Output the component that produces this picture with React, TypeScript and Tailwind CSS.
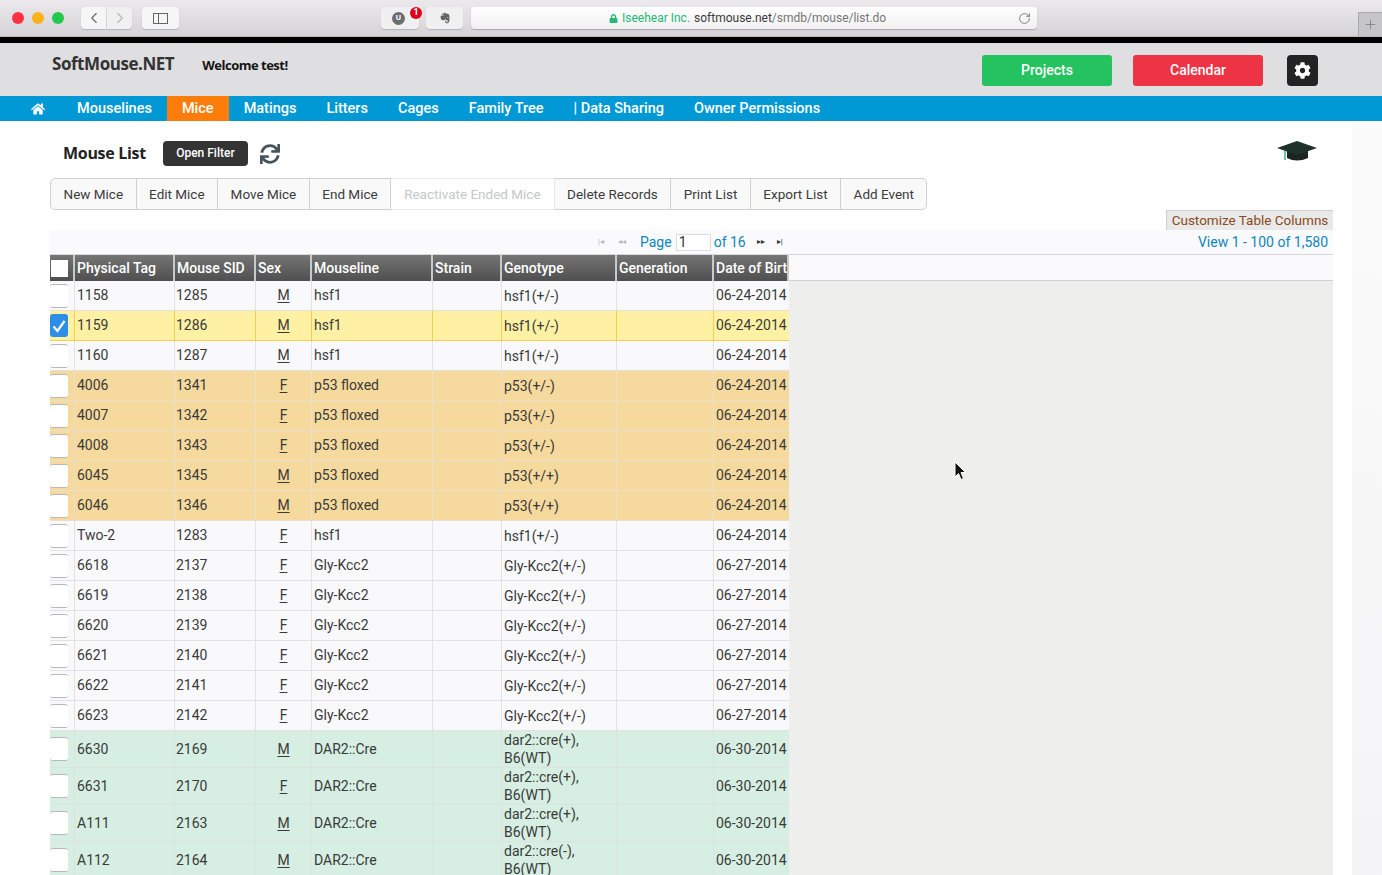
import { ChevronLeft, ChevronRight, Plus, RotateCw } from "lucide-react";
import { FaCog, FaEvernote, FaHome, FaLock, FaSync } from "react-icons/fa";

type Row = {
  tag: string;
  sid: string;
  sex: string;
  line: string;
  genotype: string;
  dob: string;
  tone: "plain" | "picked" | "tan" | "green";
};

const row = (
  tag: string,
  sid: string,
  sex: string,
  line: string,
  genotype: string,
  dob: string,
  tone: Row["tone"]
): Row => ({ tag, sid, sex, line, genotype, dob, tone });

const rows: Row[] = [
  row("1158", "1285", "M", "hsf1", "hsf1(+/-)", "06-24-2014", "plain"),
  row("1159", "1286", "M", "hsf1", "hsf1(+/-)", "06-24-2014", "picked"),
  row("1160", "1287", "M", "hsf1", "hsf1(+/-)", "06-24-2014", "plain"),
  row("4006", "1341", "F", "p53 floxed", "p53(+/-)", "06-24-2014", "tan"),
  row("4007", "1342", "F", "p53 floxed", "p53(+/-)", "06-24-2014", "tan"),
  row("4008", "1343", "F", "p53 floxed", "p53(+/-)", "06-24-2014", "tan"),
  row("6045", "1345", "M", "p53 floxed", "p53(+/+)", "06-24-2014", "tan"),
  row("6046", "1346", "M", "p53 floxed", "p53(+/+)", "06-24-2014", "tan"),
  row("Two-2", "1283", "F", "hsf1", "hsf1(+/-)", "06-24-2014", "plain"),
  row("6618", "2137", "F", "Gly-Kcc2", "Gly-Kcc2(+/-)", "06-27-2014", "plain"),
  row("6619", "2138", "F", "Gly-Kcc2", "Gly-Kcc2(+/-)", "06-27-2014", "plain"),
  row("6620", "2139", "F", "Gly-Kcc2", "Gly-Kcc2(+/-)", "06-27-2014", "plain"),
  row("6621", "2140", "F", "Gly-Kcc2", "Gly-Kcc2(+/-)", "06-27-2014", "plain"),
  row("6622", "2141", "F", "Gly-Kcc2", "Gly-Kcc2(+/-)", "06-27-2014", "plain"),
  row("6623", "2142", "F", "Gly-Kcc2", "Gly-Kcc2(+/-)", "06-27-2014", "plain"),
  row("6630", "2169", "M", "DAR2::Cre", "dar2::cre(+), B6(WT)", "06-30-2014", "green"),
  row("6631", "2170", "F", "DAR2::Cre", "dar2::cre(+), B6(WT)", "06-30-2014", "green"),
  row("A111", "2163", "M", "DAR2::Cre", "dar2::cre(+), B6(WT)", "06-30-2014", "green"),
  row("A112", "2164", "M", "DAR2::Cre", "dar2::cre(-), B6(WT)", "06-30-2014", "green"),
];

const toneClass = {
  plain: "h-[30px] bg-[#f9f9fc] border-[#e2e2e2]",
  picked: "h-[30px] bg-[#fef1a4] border-[#f0d24e]",
  tan: "h-[30px] bg-[#f6d99c] border-[#e8e0cc]",
  green: "h-[37px] bg-[#d6efe2] border-[#dce3df]",
};

const navItems = ["Mouselines", "Mice", "Matings", "Litters", "Cages", "Family Tree", "| Data Sharing", "Owner Permissions"];
const toolbar = ["New Mice", "Edit Mice", "Move Mice", "End Mice", "Reactivate Ended Mice", "Delete Records", "Print List", "Export List", "Add Event"];

function Checkbox({ checked }: { checked?: boolean }) {
  if (checked) {
    return (
      <div className="w-[18px] h-[23px] rounded-[3px] bg-[#2d8ee8] flex items-center justify-center">
        <svg width="14" height="14" viewBox="0 0 14 14" fill="none">
          <path d="M1.5 7.5 L5.5 12 L12.5 2" stroke="white" strokeWidth="2.2" />
        </svg>
      </div>
    );
  }
  return <div className="w-[18px] h-[24px] rounded-[3px] bg-white border-y border-[#b8b8b8]" />;
}

function HeadCell({ w, label }: { w: string; label: string }) {
  return (
    <div className={`${w} h-full shrink-0 border-r-2 border-[#c9c9c9] pl-[2px] flex items-center overflow-hidden whitespace-nowrap`}>
      {label}
    </div>
  );
}

export default function App() {
  return (
    <div className="relative h-[875px] w-[1382px] overflow-hidden bg-white font-['Roboto',sans-serif] text-[14px] text-[#3a3a3a]">
      {/* browser chrome */}
      <div className="h-[37px] flex items-center bg-gradient-to-b from-[#ebe9eb] to-[#d5d3d6] border-b border-[#bcbabd]">
        <div className="flex gap-[8px] pl-[12px]">
          <span className="w-[12px] h-[12px] rounded-full bg-[#fc3043]" />
          <span className="w-[12px] h-[12px] rounded-full bg-[#fdb11b]" />
          <span className="w-[12px] h-[12px] rounded-full bg-[#22c94c]" />
        </div>
        <div className="ml-[17px] flex gap-px">
          <div className="w-[25px] h-[22px] rounded-l-[4px] bg-[#f7f6f7] shadow-[0_1px_1px_#b5b3b5] flex items-center justify-center text-[#666]">
            <ChevronLeft size={18} strokeWidth={1.5} />
          </div>
          <div className="w-[25px] h-[22px] rounded-r-[4px] bg-[#f1f0f1] shadow-[0_1px_1px_#b5b3b5] flex items-center justify-center text-[#b5b5b5]">
            <ChevronRight size={18} strokeWidth={1.5} />
          </div>
        </div>
        <div className="ml-[10px] w-[37px] h-[22px] rounded-[4px] bg-[#f7f6f7] shadow-[0_1px_1px_#b5b3b5] flex items-center justify-center">
          <div className="w-[15px] h-[11px] border border-[#666] flex">
            <div className="w-[5px] border-r border-[#666]" />
          </div>
        </div>
        <div className="ml-[202px] w-[38px] h-[22px] rounded-[4px] bg-[#f1f0f1] shadow-[0_1px_1px_#b5b3b5] flex items-center pl-[11px] relative">
          <span className="w-[13px] h-[13px] rounded-full bg-[#6c6c6c] text-white text-[8px] font-bold flex items-center justify-center">U</span>
          <span className="absolute left-[29px] top-0 w-[12px] h-[12px] rounded-full bg-[#e0001b] text-white text-[9px] font-bold flex items-center justify-center">1</span>
        </div>
        <div className="ml-[7px] w-[37px] h-[22px] rounded-[4px] bg-[#f1f0f1] shadow-[0_1px_1px_#b5b3b5] flex items-center justify-center text-[#666]">
          <FaEvernote size={12} />
        </div>
        <div className="ml-[8px] w-[566px] h-[22px] rounded-[4px] bg-gradient-to-b from-white to-[#f1f0f1] shadow-[0_1px_1px_#a9a7a9] flex items-center text-[12px] pl-[138px] relative">
          <FaLock size={9} className="text-[#27b877] mr-[4px]" />
          <span className="text-[#27b877]">Iseehear Inc.</span>
          <span className="ml-[4px] text-[#3a3a3a]">softmouse.net</span>
          <span className="text-[#777]">/smdb/mouse/list.do</span>
          <RotateCw size={13} strokeWidth={1.5} className="absolute right-[6px] text-[#666]" />
        </div>
        <div className="ml-auto self-end w-[24px] h-[24px] bg-[#c6c5c7] border-l border-t border-[#aaa] flex items-center justify-center text-[#777]">
          <Plus size={15} strokeWidth={1.2} />
        </div>
      </div>
      <div className="h-[6px] bg-black" />

      {/* site header */}
      <div className="h-[53px] bg-[#dfdfe1] flex items-start">
        <div className="ml-[52px] mt-[11px] text-[17px] leading-[20px] font-bold text-[#333] font-['Open_Sans',sans-serif] tracking-[-0.45px]">SoftMouse.NET</div>
        <div className="ml-[28px] mt-[14px] text-[13px] leading-[16px] font-bold text-[#151515] font-['Open_Sans',sans-serif] tracking-[-0.5px]">Welcome test!</div>
        <div className="ml-auto mt-[12px] flex items-center pr-[64px]">
          <div className="w-[130px] h-[31px] rounded-[3px] bg-[#25c35f] text-white font-medium flex items-center justify-center">Projects</div>
          <div className="ml-[21px] w-[130px] h-[31px] rounded-[3px] bg-[#ee3444] text-white font-medium flex items-center justify-center">Calendar</div>
          <div className="ml-[24px] w-[31px] h-[31px] rounded-[4px] bg-[#232323] text-white flex items-center justify-center">
            <FaCog size={17} />
          </div>
        </div>
      </div>

      {/* nav */}
      <div className="h-[25px] bg-[#0099d5] flex items-stretch text-white text-[14.5px] font-medium pl-[31px]">
        <div className="w-[15px] mr-[16px] flex items-center">
          <FaHome size={14} />
        </div>
        {navItems.map((item) => (
          <div key={item} className={`px-[15px] flex items-center whitespace-nowrap ${item === "Mice" ? "bg-[#fd7c0a]" : ""}`}>
            {item}
          </div>
        ))}
      </div>

      {/* page */}
      <div className="flex">
        <div className="w-[1333px] pl-[50px] shrink-0">
          <div className="h-[57px] flex items-center relative">
            <div className="ml-[13px] mt-[7px] text-[16px] font-bold text-[#222] font-['Open_Sans',sans-serif] tracking-[-0.3px]">Mouse List</div>
            <div className="ml-[17px] mt-[7px] w-[85px] h-[25px] rounded-[4px] bg-[#343434] text-white text-[12px] font-medium flex items-center justify-center">Open Filter</div>
            <FaSync size={20} className="ml-[12px] mt-[9px] text-[#47545c]" />
            <svg className="ml-auto mr-[16px] mt-[4px]" width="40" height="24" viewBox="0 0 40 24">
              <path d="M10 11 L10 18 Q20 23 31 18 L31 11 Z" fill="#1c2321" />
              <path d="M0 8 L20 1 L40 8 L20 15 Z" fill="#20302b" />
              <path d="M8 11 L8 20" stroke="#3bb58d" strokeWidth="1.5" />
            </svg>
          </div>

          <div className="flex h-[32px] w-[856px]">
            {toolbar.map((label, i) => {
              const off = label.startsWith("Reactivate");
              return (
                <div
                  key={label}
                  className={`flex items-center justify-center whitespace-nowrap text-[13.5px] border-y border-r border-[#d0d0d0] ${
                    off ? "bg-white text-[#c4c8c8] border-[#e9e9e9] px-[13px]" : "bg-[#f9f9fa] text-[#3c3c3c] px-[12.5px]"
                  } ${i === 0 ? "border-l rounded-l-[5px]" : ""} ${i === toolbar.length - 1 ? "rounded-r-[5px]" : ""}`}
                >
                  {label}
                </div>
              );
            })}
          </div>

          <div className="flex justify-end h-[20px] mt-[0px]">
            <div className="w-[167px] h-[20px] bg-[#e9e9e9] border-t border-l border-[#cfcfcf] text-[#8a4a22] flex items-center justify-center text-[13.5px]">
              Customize Table Columns
            </div>
          </div>

          {/* pager */}
          <div className="h-[25px] bg-[#fafafc] flex items-center relative border-b border-[#d8d8d8]">
            <div className="ml-[548px] flex items-center text-[#0d86bb]">
              <span className="text-[8px] text-[#b8b8b8] w-[20px]">|◂</span>
              <span className="text-[8px] text-[#b8b8b8] w-[22px]">◂◂</span>
              <span>Page</span>
              <span className="ml-[4px] w-[35px] h-[17px] bg-white border border-[#ddd] text-[#333] pl-[2px] leading-[15px]">1</span>
              <span className="ml-[3px]">of 16</span>
              <span className="ml-[11px] text-[8px] text-[#333] w-[20px]">▸▸</span>
              <span className="text-[8px] text-[#333]">▸|</span>
            </div>
            <div className="ml-auto pr-[5px] text-[#0d86bb] whitespace-nowrap">View 1 - 100 of 1,580</div>
          </div>

          {/* table */}
          <div className="h-[26px] flex items-stretch bg-[#fafafc] border-b border-[#d0d0d0]">
            <div className="w-[739px] h-[26px] shrink-0 flex items-center bg-gradient-to-b from-[#757575] to-[#4f4f4f] text-white font-medium text-[14px]">
              <div className="w-[25px] h-full shrink-0 border-r-2 border-[#c9c9c9] pl-[1px] flex items-center">
                <div className="w-[17px] h-[17px] bg-white" />
              </div>
              <HeadCell w="w-[100px]" label="Physical Tag" />
              <HeadCell w="w-[81px]" label="Mouse SID" />
              <HeadCell w="w-[56px]" label="Sex" />
              <HeadCell w="w-[121px]" label="Mouseline" />
              <HeadCell w="w-[69px]" label="Strain" />
              <HeadCell w="w-[115px]" label="Genotype" />
              <HeadCell w="w-[97px]" label="Generation" />
              <HeadCell w="w-[75px]" label="Date of Birth" />
            </div>
          </div>

          <div className="bg-[#eeeeec] h-[600px]">
            {rows.map((r) => (
              <div key={r.tag} className={`w-[739px] flex items-center border-b ${toneClass[r.tone]}`}>
                <div className="w-[25px] shrink-0 h-full border-r border-inherit flex items-center">
                  <Checkbox checked={r.tone === "picked"} />
                </div>
                <div className="w-[100px] shrink-0 h-full border-r border-inherit pl-[2px] flex items-center">{r.tag}</div>
                <div className="w-[81px] shrink-0 h-full border-r border-inherit pl-[1px] flex items-center">{r.sid}</div>
                <div className="w-[56px] shrink-0 h-full border-r border-inherit flex items-center justify-center underline underline-offset-2">{r.sex}</div>
                <div className="w-[121px] shrink-0 h-full border-r border-inherit pl-[2px] flex items-center">{r.line}</div>
                <div className="w-[69px] shrink-0 h-full border-r border-inherit" />
                <div className="w-[115px] shrink-0 h-full border-r border-inherit pl-[2px] pr-[20px] flex items-center leading-[18px]">{r.genotype}</div>
                <div className="w-[97px] shrink-0 h-full border-r border-inherit" />
                <div className="w-[75px] shrink-0 h-full pl-[2px] flex items-center">{r.dob}</div>
              </div>
            ))}
          </div>
        </div>
        <div className="ml-[19px] w-[30px] bg-gradient-to-b from-[#fbfbfb] to-[#f4f4f6]" />
      </div>

      {/* mouse pointer */}
      <svg className="absolute left-[954px] top-[461px]" width="13" height="20" viewBox="0 0 13 20">
        <path d="M1 1 L1 16 L4.5 12.5 L7 18.5 L9.5 17.5 L7 11.5 L11.5 11.5 Z" fill="#111" stroke="#fff" strokeWidth="1" />
      </svg>
    </div>
  );
}
